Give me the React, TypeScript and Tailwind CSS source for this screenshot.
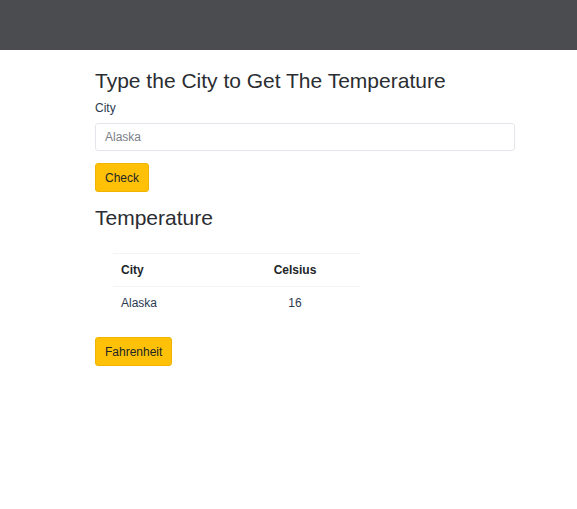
export default function App() {
  return (
    <div className="min-h-[509px] bg-white font-['Liberation_Sans',Arial,sans-serif] text-[#212529]">
      <div className="h-[50px] bg-[#4b4c4f]" />

      <div className="mx-[95px] w-[420px] pt-[18px]">
        <h3 className="text-[21px] leading-[26px] text-[#2a2d31]">Type the City to Get The Temperature</h3>
        <label className="mt-[6px] block text-[12px] leading-[16px] text-[#2c3a4f]">City</label>
        <input
          className="mt-[7px] block h-[28px] w-full rounded-[3px] border border-[#e3e7ec] px-[9px] text-[12px] outline-none placeholder:text-[#7b8088]"
          placeholder="Alaska"
        />
        <button className="mt-[12px] h-[29px] rounded-[3px] border border-[#f0b400] bg-[#ffc107] px-[9px] text-[12px] text-[#212529]">
          Check
        </button>
        <h3 className="mt-[13px] text-[21px] leading-[26px] text-[#2a2d31]">Temperature</h3>

        <div className="ml-[18px] mt-[22px] w-[247px] text-[12px] text-[#2c3a4f]">
          <div className="grid h-[34px] grid-cols-[117px_130px] items-center border-y border-[#f3f4f6] font-bold text-[#212529]">
            <div className="pl-[8px]">City</div>
            <div className="text-center">Celsius</div>
          </div>
          <div className="grid h-[32px] grid-cols-[117px_130px] items-center">
            <div className="pl-[8px]">Alaska</div>
            <div className="text-center">16</div>
          </div>
        </div>

        <button className="mt-[18px] h-[29px] rounded-[3px] border border-[#f0b400] bg-[#ffc107] px-[9px] text-[12px] text-[#212529]">
          Fahrenheit
        </button>
      </div>
    </div>
  );
}
